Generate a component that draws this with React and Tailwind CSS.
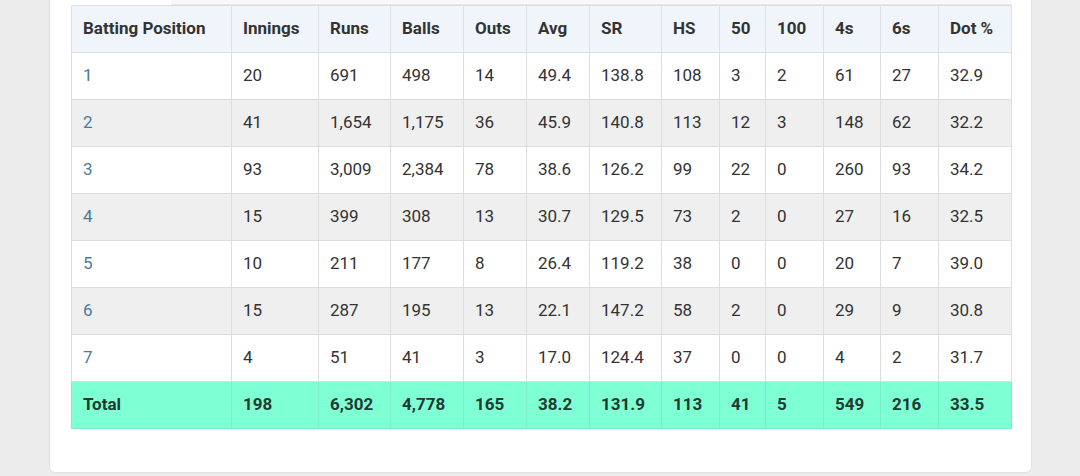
const cols = [160, 87, 72, 73, 63, 63, 72, 58, 46, 58, 57, 58, 73];

const headers = ['Batting Position', 'Innings', 'Runs', 'Balls', 'Outs', 'Avg', 'SR', 'HS', '50', '100', '4s', '6s', 'Dot %'];

const rows = [
  ['1', '20', '691', '498', '14', '49.4', '138.8', '108', '3', '2', '61', '27', '32.9'],
  ['2', '41', '1,654', '1,175', '36', '45.9', '140.8', '113', '12', '3', '148', '62', '32.2'],
  ['3', '93', '3,009', '2,384', '78', '38.6', '126.2', '99', '22', '0', '260', '93', '34.2'],
  ['4', '15', '399', '308', '13', '30.7', '129.5', '73', '2', '0', '27', '16', '32.5'],
  ['5', '10', '211', '177', '8', '26.4', '119.2', '38', '0', '0', '20', '7', '39.0'],
  ['6', '15', '287', '195', '13', '22.1', '147.2', '58', '2', '0', '29', '9', '30.8'],
  ['7', '4', '51', '41', '3', '17.0', '124.4', '37', '0', '0', '4', '2', '31.7'],
];

const total = ['Total', '198', '6,302', '4,778', '165', '38.2', '131.9', '113', '41', '5', '549', '216', '33.5'];

export default function App() {
  return (
    <div className="h-[476px] w-[1080px] overflow-hidden bg-[#ececec] pl-[49px] font-['Roboto',sans-serif]">
      <div className="h-[473px] w-[983px] rounded-b-[6px] border-x border-b border-[#e2e2e2] bg-white px-[21px]">
        {/* tab strip bottom */}
        <div className="flex h-[5px] w-[940px]">
          <div className="w-[100px] bg-white" />
          <div className="flex-1 border-b border-[#e6e6e6] bg-[#f8f8f8]" />
        </div>
        <table className="w-[940px] table-fixed border-collapse text-[17px] text-[#333]">
          <colgroup>
            {cols.map((w, i) => (
              <col key={i} style={{ width: w }} />
            ))}
          </colgroup>
          <thead>
            <tr className="h-[47px] bg-[#f0f5fb]">
              {headers.map((h) => (
                <th key={h} className="border border-[#dcdfe3] pl-[11px] text-left font-bold">
                  {h}
                </th>
              ))}
            </tr>
          </thead>
          <tbody>
            {rows.map((r, i) => (
              <tr key={r[0]} className={i % 2 === 1 ? 'h-[47px] bg-[#efefef]' : 'h-[47px] bg-white'}>
                {r.map((c, j) => (
                  <td
                    key={j}
                    className={j === 0 ? 'border border-[#dddddd] pl-[11px] text-[#4b7a9b]' : 'border border-[#dddddd] pl-[11px]'}
                  >
                    {c}
                  </td>
                ))}
              </tr>
            ))}
            <tr className="h-[47px] bg-[#7fffd4]">
              {total.map((c, j) => (
                <td key={j} className="border border-[#79efc6] pl-[11px] font-bold text-[#1d3b30]">
                  {c}
                </td>
              ))}
            </tr>
          </tbody>
        </table>
      </div>
    </div>
  );
}
